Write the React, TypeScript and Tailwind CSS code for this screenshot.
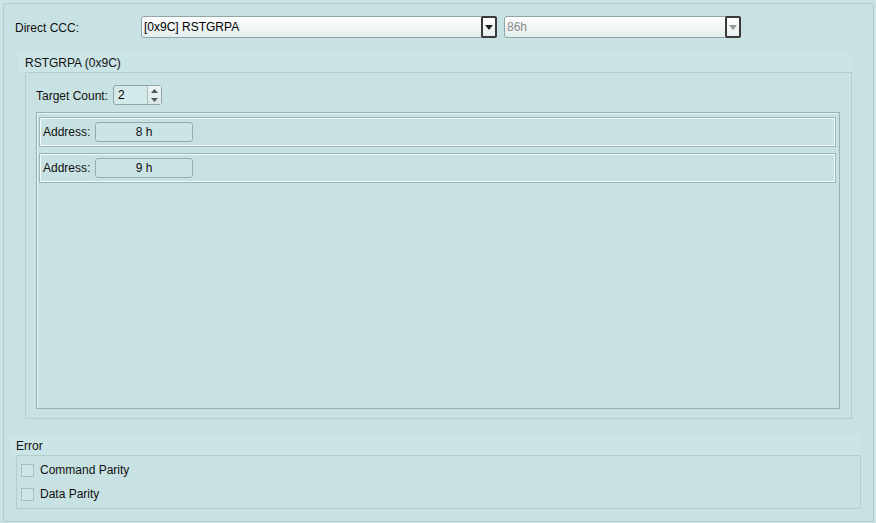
import React from 'react';

const font = { fontFamily: '"Liberation Sans", Arial, sans-serif' };

function Combo({ value, width, disabled }: { value: string; width: string; disabled?: boolean }) {
  return (
    <div
      className={`flex h-[22px] ${width} items-stretch rounded-[3px] border border-[#8ea6a7] bg-gradient-to-b from-white to-[#e3eeee]`}
    >
      <div className={`flex flex-1 items-center pl-[2px] ${disabled ? 'text-[#8a8a8a]' : 'text-black'}`}>{value}</div>
      <div className="-my-px -mr-px flex w-[16px] items-center justify-center rounded-[2px] border-2 border-[#3a3a3a] bg-gradient-to-b from-white to-[#e8eeee]">
        <svg width="8" height="5" viewBox="0 0 8 5">
          <path d="M0 0h8L4 5z" fill={disabled ? '#9a9a9a' : '#222'} />
        </svg>
      </div>
    </div>
  );
}

function Spinner({ value }: { value: string }) {
  return (
    <div className="flex h-[20px] w-[49px] rounded-[3px] border border-[#8ea6a7] bg-[#d3e9ea]">
      <div className="flex flex-1 items-center pl-[4px] text-black">{value}</div>
      <div className="flex w-[14px] flex-col border-l border-[#a9bfc0] bg-gradient-to-b from-[#eef5f5] to-[#d8e6e6]">
        <div className="flex flex-1 items-center justify-center">
          <svg width="7" height="4" viewBox="0 0 7 4">
            <path d="M0 4h7L3.5 0z" fill="#555" />
          </svg>
        </div>
        <div className="flex flex-1 items-center justify-center">
          <svg width="7" height="4" viewBox="0 0 7 4">
            <path d="M0 0h7L3.5 4z" fill="#555" />
          </svg>
        </div>
      </div>
    </div>
  );
}

function AddressRow({ value }: { value: string }) {
  return (
    <div className="flex h-[30px] items-center border border-[#9db7b8] pl-[3px] shadow-[inset_1px_1px_0_#f4fafa,inset_-1px_-1px_0_#f4fafa]">
      <span className="w-[52px]">Address:</span>
      <div className="flex h-[20px] w-[98px] items-center justify-center rounded-[3px] border border-[#93acad] bg-[#cbe4e5]">
        {value}
      </div>
    </div>
  );
}

function Check({ label }: { label: string }) {
  return (
    <label className="flex h-[24px] items-center gap-[6px]">
      <span className="h-[13px] w-[13px] border border-[#a7bdbe] bg-[#d0e7e8]" />
      <span>{label}</span>
    </label>
  );
}

export default function App() {
  return (
    <div className="h-[523px] w-[876px] bg-[#cce4e5] p-[3px] text-[12px] text-[#111]" style={font}>
      <div className="flex h-[519px] w-[871px] flex-col rounded-[2px] border border-[#b2cccd] bg-[#c8e2e3]">
        {/* Direct CCC row */}
        <div className="mt-[12px] flex items-center pl-[11px]">
          <span className="w-[126px] pt-[1px]">Direct CCC:</span>
          <Combo value="[0x9C] RSTGRPA" width="w-[356px]" />
          <div className="w-[7px]" />
          <Combo value="86h" width="w-[237px]" disabled />
        </div>

        {/* RSTGRPA group */}
        <div className="ml-[14px] mt-[14px] w-[834px]">
          <div className="flex h-[20px] items-center bg-[#cbe4e5] pl-[7px] pt-[1px]">RSTGRPA (0x9C)</div>
          <div className="ml-[7px] flex h-[347px] w-[827px] flex-col border border-[#b4cecf]">
            <div className="mt-[12px] flex items-center pl-[10px]">
              <span className="w-[77px] pt-[1px]">Target Count:</span>
              <Spinner value="2" />
            </div>
            <div className="ml-[10px] mt-[7px] flex h-[297px] w-[804px] flex-col gap-[6px] border border-[#98b2b3] p-[4px] pl-[2px] pr-[3px] shadow-[inset_1px_1px_0_#e6f2f2]">
              <AddressRow value="8 h" />
              <AddressRow value="9 h" />
            </div>
          </div>
        </div>

        {/* Error group */}
        <div className="ml-[6px] mt-[16px] w-[851px]">
          <div className="flex h-[20px] items-center bg-[#cbe4e5] pl-[6px] pt-[1px]">Error</div>
          <div className="ml-[6px] flex h-[54px] flex-col justify-center border border-[#b4cecf] pl-[4px]">
            <Check label="Command Parity" />
            <Check label="Data Parity" />
          </div>
        </div>
      </div>
    </div>
  );
}
